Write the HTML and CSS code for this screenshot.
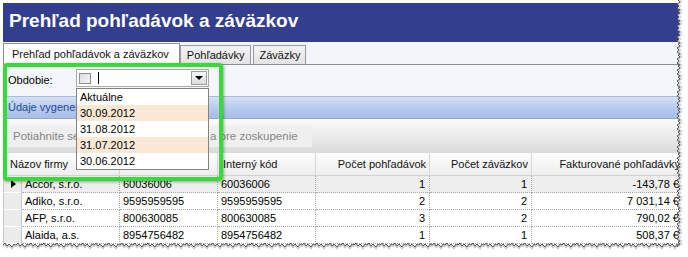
FILE: index.html
```html
<!DOCTYPE html>
<html>
  <head>
    <title>Prehľad pohľadávok a záväzkov</title>
    <link rel="stylesheet" href="styles.css">
  </head>
  <body>
    <div class="shot">
      <div class="frame">
        <div class="title">Prehľad pohľadávok a záväzkov</div>

        <div class="tabs">
          <div class="tab active">Prehľad pohľadávok a záväzkov</div>
          <div class="tab">Pohľadávky</div>
          <div class="tab">Záväzky</div>
        </div>

        <div class="filter">
          <span class="filter-label">Obdobie:</span>
          <div class="combo">
            <span class="check"></span>
            <span class="caret"></span>
            <span class="drop-btn"><span class="arrow"></span></span>
          </div>
        </div>

        <div class="info"><span class="info-text">Údaje vygenerované k 30.09.2012</span></div>

        <div class="group-panel">
          <div class="group-hint">
            <span class="hint-start">Potiahnite sem hlavičku stĺpc</span><span class="hint-end">a pre zoskupenie</span>
          </div>
        </div>

        <div class="grid">
          <div class="row head">
            <div class="hcell first">Názov firmy</div>
            <div class="hcell"></div>
            <div class="hcell">Interný kód</div>
            <div class="hcell num">Počet pohľadávok</div>
            <div class="hcell num">Počet záväzkov</div>
            <div class="hcell num last">Fakturované pohľadávky</div>
          </div>
          <div class="row current">
            <div class="ind"><span class="pointer"></span></div>
            <div class="cell">Accor, s.r.o.</div>
            <div class="cell">60036006</div>
            <div class="cell">60036006</div>
            <div class="cell num">1</div>
            <div class="cell num">1</div>
            <div class="cell num last">-143,78 €</div>
          </div>
          <div class="row">
            <div class="ind"></div>
            <div class="cell">Adiko, s.r.o.</div>
            <div class="cell">9595959595</div>
            <div class="cell">9595959595</div>
            <div class="cell num">2</div>
            <div class="cell num">2</div>
            <div class="cell num last">7 031,14 €</div>
          </div>
          <div class="row">
            <div class="ind"></div>
            <div class="cell">AFP, s.r.o.</div>
            <div class="cell">800630085</div>
            <div class="cell">800630085</div>
            <div class="cell num">3</div>
            <div class="cell num">2</div>
            <div class="cell num last">790,02 €</div>
          </div>
          <div class="row">
            <div class="ind"></div>
            <div class="cell">Alaida, a.s.</div>
            <div class="cell">8954756482</div>
            <div class="cell">8954756482</div>
            <div class="cell num">1</div>
            <div class="cell num">1</div>
            <div class="cell num last">508,37 €</div>
          </div>
        </div>
      </div>

      <!-- open combo list -->
      <ul class="dropdown">
        <li>Aktuálne</li>
        <li class="alt">30.09.2012</li>
        <li>31.08.2012</li>
        <li class="alt">31.07.2012</li>
        <li>30.06.2012</li>
      </ul>

      <div class="highlight"></div>

      <!-- torn paper edges -->
      <svg class="tear-bottom" width="678" height="17">
        <defs>
          <pattern id="zig-b" width="13" height="17" patternUnits="userSpaceOnUse">
            <path d="M0,5 L2,3 L4,6 L6,4 L9,7 L11,4 L13,5 L13,17 L0,17 Z" fill="#fff"/>
            <path d="M0,6.5 L2,4.5 L4,7.5 L6,5.5 L9,8.5 L11,5.5 L13,6.5" fill="none" stroke="#c9c9c9" stroke-width="1.5"/>
            <path d="M0,5 L2,3 L4,6 L6,4 L9,7 L11,4 L13,5" fill="none" stroke="#555" stroke-width="1"/>
          </pattern>
        </defs>
        <rect width="678" height="17" fill="url(#zig-b)"/>
      </svg>
      <svg class="tear-right" width="14" height="247">
        <defs>
          <pattern id="zig-r" width="14" height="11" patternUnits="userSpaceOnUse">
            <path d="M4,0 L6,2 L3,4 L5,6 L3,8 L6,10 L4,11 L14,11 L14,0 Z" fill="#fff"/>
            <path d="M5.5,0 L7.5,2 L4.5,4 L6.5,6 L4.5,8 L7.5,10 L5.5,11" fill="none" stroke="#cfcfcf" stroke-width="1.5"/>
            <path d="M4,0 L6,2 L3,4 L5,6 L3,8 L6,10 L4,11" fill="none" stroke="#555" stroke-width="1"/>
          </pattern>
        </defs>
        <rect width="14" height="247" fill="url(#zig-r)"/>
      </svg>
    </div>
  </body>
</html>
```

FILE: styles.css
```css
* {
  box-sizing: border-box;
}

body {
  margin: 0;
  font-family: "Liberation Sans", Arial, sans-serif;
  font-size: 11px;
  color: #000;
  background: #fff;
}

.shot {
  position: relative;
  width: 688px;
  height: 257px;
  overflow: hidden;
  background: #fff;
}

.frame {
  margin: 3px 0 0 3px;
  width: 680px;
  background: #fff;
}

.title {
  height: 39px;
  line-height: 35px;
  padding-left: 6px;
  background: #333e8e;
  color: #fff;
  font-size: 19px;
  font-weight: bold;
}

/* tabs */
.tabs {
  display: flex;
  align-items: flex-end;
  height: 23px;
  border-bottom: 1px solid #8d8d8d;
  background: #f2f5fa;
}

.tab {
  height: 19px;
  line-height: 18px;
  padding: 0 5px 0 6px;
  margin-right: 2px;
  border: 1px solid #9a9a9a;
  border-bottom: none;
  background: linear-gradient(#f4f4f4, #e3e3e3);
  color: #111;
  white-space: nowrap;
}

.tab.active {
  height: 22px;
  line-height: 21px;
  margin-bottom: -1px;
  margin-right: 0;
  padding: 0 10px 0 8px;
  border-color: #919191;
  background: #fff;
}

/* filter */
.filter {
  display: flex;
  height: 31px;
  padding: 4px 0 0 5px;
  background: #f3f6fb;
}

.filter-label {
  width: 68px;
  line-height: 18px;
  padding-top: 2px;
}

.combo {
  display: flex;
  align-items: center;
  width: 133px;
  height: 18px;
  border: 1px solid #a9a9a9;
  background: #fff;
}

.check {
  width: 12px;
  height: 11px;
  margin-left: 2px;
  border: 1px solid #8e8e8e;
  background: linear-gradient(135deg, #dcdcdc, #f6f6f6);
}

.caret {
  width: 1px;
  height: 12px;
  margin-left: 7px;
  background: #000;
}

.drop-btn {
  display: flex;
  align-items: center;
  justify-content: center;
  width: 16px;
  height: 14px;
  margin-left: auto;
  margin-right: 1px;
  border: 1px solid #9c9c9c;
  background: linear-gradient(#f6f6f6, #dcdcdc);
}

.arrow {
  width: 0;
  height: 0;
  border-left: 4px solid transparent;
  border-right: 4px solid transparent;
  border-top: 4px solid #000;
}

/* info band */
.info {
  height: 23px;
  line-height: 21px;
  padding-left: 5px;
  border-top: 1px solid #a8bae0;
  border-bottom: 1px solid #8fa8d8;
  background: linear-gradient(#d4e0f5, #b9ccee 50%, #a6bde8);
  color: #1d4a9c;
}

.info-text {
  display: inline-block;
  max-width: 68px;
  overflow: hidden;
  white-space: nowrap;
  vertical-align: top;
}

/* group panel */
.group-panel {
  height: 34px;
  padding: 7px 0 0 5px;
  background: linear-gradient(#fbfbfb, #dadada);
}

.group-hint {
  display: flex;
  width: 304px;
  height: 21px;
  line-height: 21px;
  padding-left: 5px;
  background: #efefef;
  color: #858585;
  font-size: 11.5px;
  white-space: nowrap;
}

.hint-start {
  width: 63px;
  overflow: hidden;
}

.hint-end {
  margin-left: 134px;
}

/* grid */
.row {
  display: grid;
  grid-template-columns: 19px 98px 98px 98px 114px 102px 151px;
  height: 17px;
  line-height: 16px;
}

.row.head {
  height: 23px;
  line-height: 22px;
  background: linear-gradient(#fdfdfd, #eeeeee);
  border-bottom: 1px solid #d2d2d2;
}

.hcell {
  padding: 0 4px 0 5px;
  border-right: 1px solid #d6d6d6;
  color: #111;
  white-space: nowrap;
  overflow: hidden;
}

.hcell.first {
  grid-column: span 2;
  padding-left: 7px;
}

.hcell.num {
  text-align: right;
  padding-right: 3px;
}

.cell {
  padding: 0 3px 0 3px;
  border-right: 1px dotted #a9a9a9;
  border-bottom: 1px dotted #a9a9a9;
  white-space: nowrap;
  overflow: hidden;
}

.cell.num {
  text-align: right;
  padding-right: 4px;
}

.last {
  border-right: none;
  padding-right: 5px;
}

.row.current .cell {
  background: #eeeeee;
}

.ind {
  display: flex;
  align-items: center;
  padding-left: 7px;
  background: #ececec;
  border-left: 1px solid #c6c6c6;
  border-right: 1px solid #c6c6c6;
  border-bottom: 1px solid #fff;
}

.pointer {
  width: 0;
  height: 0;
  border-top: 4px solid transparent;
  border-bottom: 4px solid transparent;
  border-left: 5px solid #000;
}

/* overlays */
.dropdown {
  position: absolute;
  left: 76px;
  top: 88px;
  width: 133px;
  margin: 0;
  padding: 0;
  list-style: none;
  border: 1px solid #828282;
  background: #fff;
}

.dropdown li {
  height: 16px;
  line-height: 16px;
  padding-left: 3px;
}

.dropdown li.alt {
  background: #f9e8d6;
}

.highlight {
  position: absolute;
  left: 3px;
  top: 63px;
  width: 220px;
  height: 118px;
  border: 4px solid #36dc36;
  border-radius: 4px;
  box-shadow: 1px 1px 3px rgba(0, 0, 0, 0.35);
}

.tear-bottom {
  position: absolute;
  left: 3px;
  top: 240px;
}

.tear-right {
  position: absolute;
  left: 674px;
  top: 0;
}
```
